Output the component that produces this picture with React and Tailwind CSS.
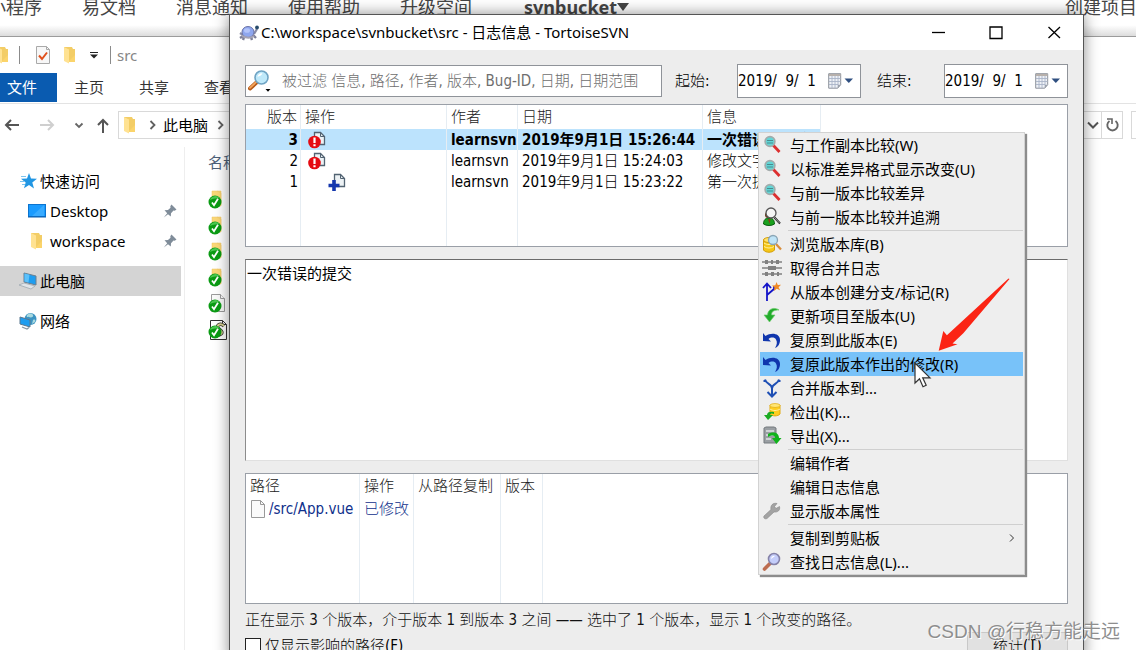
import React, { useState } from "react";

/* ---------- 图标 ---------- */

const Folder = ({ className = "" }) => (
  <svg viewBox="0 0 14 18" className={`h-[18px] w-[14px] shrink-0 ${className}`}>
    <path d="M1 1h8l1 2h2v12H1z" fill="#f3cd66" />
    <path d="M1 1l5 2.500v14L1 15z" fill="#ffe292" />
    <path d="M6 15l6-6v7H6z" fill="#fbd46b" />
  </svg>
);

const PropertyPage = () => (
  <svg viewBox="0 0 14 18" className="h-[18px] w-[14px] shrink-0">
    <path d="M.5.5h10l3 3v14H.5z" fill="#f7f7f7" stroke="#a9a9a9" />
    <path d="M10.500.5v3h3" fill="none" stroke="#a9a9a9" />
    <path d="M3 9.500l3 3.500 5-6.500" fill="none" stroke="#e0501c" strokeWidth="2" />
  </svg>
);

const Star = () => (
  <svg viewBox="0 0 17 16" className="h-4 w-[17px] shrink-0">
    <path d="M9 0l2 5.500 6 .3-4.700 3.700L14 15.500l-5-3.400-5 3.200 1.700-5.800L1 5.800l6-.3z" fill="#2196e3" />
    <path d="M1 3.500h5M0 8.500h4M2 11.500h3" stroke="#7cc4ef" strokeWidth="1" />
  </svg>
);

const DesktopIcon = () => (
  <svg viewBox="0 0 18 14" className="h-[14px] w-[18px] shrink-0">
    <rect x=".5" y=".5" width="17" height="12" fill="#1a9bff" stroke="#0c74cf" />
    <path d="M4 12L16 1v11z" fill="#39abff" />
    <path d="M0 13h18" stroke="#0b5fae" />
  </svg>
);

const ComputerIcon = () => (
  <svg viewBox="0 0 19 18" className="h-[18px] w-[19px] shrink-0">
    <path d="M6 1l12 3v9L6 10z" fill="#1e9df0" stroke="#6a7f90" />
    <path d="M6.500 1.500l5 1.200-1 7.800-4-1z" fill="#5bc1fb" />
    <path d="M1 13l5-2 11 3-4 3z" fill="#e0e4e8" stroke="#98a3ac" strokeWidth=".7" />
  </svg>
);

const NetworkIcon = () => (
  <svg viewBox="0 0 18 18" className="h-[18px] w-[18px] shrink-0">
    <circle cx="11.500" cy="7" r="6" fill="#3d94c2" />
    <path d="M8 3c2-2 5-2 6 0s-2 3-4 2-3 0-2-2zM14 8c2-1 3 0 2 2l-3 2z" fill="#a9d9df" />
    <path d="M1 5l10 3v7L1 12z" fill="#1e9df0" stroke="#5b7890" />
    <path d="M3 15l5 2 2-1.500" fill="none" stroke="#8898a5" strokeWidth="1.300" />
  </svg>
);

const Pin = () => (
  <svg viewBox="0 0 14 14" className="h-[14px] w-[14px] shrink-0">
    <path d="M8.500.5l5 5-1.800 1.200-1.200-.2-2.500 2.700-.2 3.300L5 10.200.8 13.500l3.400-4.300L1.500 6.300l3.500-.2 2.500-2.400-.2-1.500z" fill="#7f8c99" />
  </svg>
);

const FileEntry = ({ kind }) => (
  <svg viewBox="0 0 20 22" className="h-[22px] w-5 shrink-0">
    {kind === "folder" && <path d="M4 2h9v15H4zM9 2l4 2v12" fill="#fbd878" stroke="#efc665" strokeWidth=".5" />}
    {kind === "file" && (
      <g fill="#fafafa" stroke="#9b9b9b">
        <path d="M3.500 1.500h9l4 4v13h-13z" />
        <path d="M12.500 1.500v4h4" />
      </g>
    )}
    {kind === "script" && (
      <g>
        <path d="M2.500 1.500h12l4 4v15h-16z" fill="#fff" stroke="#333" />
        <path d="M14.500 1.500v4h4" fill="none" stroke="#333" />
        <path d="M16 7c-4-4-9 0-5 3s4 5-1 6" fill="none" stroke="#333" strokeWidth="3.500" />
        <path d="M16 7c-4-4-9 0-5 3s4 5-1 6" fill="none" stroke="#d6cf8e" strokeWidth="2" />
      </g>
    )}
    <circle cx="7" cy="13" r="6.500" fill="#0a9b13" />
    <path d="M2 11a5.500 5.500 0 0 1 9.800-1.500C8 9 5 10 2 11z" fill="#4cc751" />
    <path d="M4 13.500l2 2.700 4-6.500" fill="none" stroke="#fff" strokeWidth="1.800" />
  </svg>
);

const Turtle = () => (
  <svg viewBox="0 0 20 16" className="h-4 w-5 shrink-0">
    <path d="M4 11L1 13M5 12l-1 3M12 12l1 3M14 10l3 3" stroke="#7d7f98" strokeWidth="2.400" />
    <path d="M1 8l3 2M15 9l3-5" stroke="#8b8da6" strokeWidth="2.200" />
    <ellipse cx="9" cy="7" rx="6" ry="5.500" fill="#8ea6ee" stroke="#6b74a8" />
    <ellipse cx="8" cy="5.500" rx="3" ry="2.300" fill="#b3c4fa" />
    <path d="M3 11c4 2 9 2 12 0" fill="none" stroke="#a5a3b4" strokeWidth="2" />
    <circle cx="18" cy="2.500" r="1.900" fill="#274b6b" />
  </svg>
);

const FilterGlass = () => (
  <svg viewBox="0 0 24 22" className="h-[22px] w-6 shrink-0">
    <path d="M2 18.500L9 12" stroke="#b55a19" strokeWidth="4" strokeLinecap="round" />
    <path d="M2 17.800L8 12.200" stroke="#f4a55c" strokeWidth="1.800" strokeLinecap="round" />
    <circle cx="13.500" cy="7.500" r="6.500" fill="#bfe9fa" stroke="#6fa4c4" strokeWidth="1.600" />
    <path d="M9.500 7a4 4 0 0 1 5-3.500c-1 2-3 2.500-5 3.500z" fill="#fff" />
    <path d="M17.500 19h5l-2.500 2.700z" fill="#000" />
  </svg>
);

const Calendar = () => (
  <svg viewBox="0 0 25 16" className="h-4 w-[25px] shrink-0">
    <path d="M.7.7h12v11l-3 3.500h-9z" fill="#eef1f6" stroke="#8d929b" />
    <path d="M1 2h11.500" stroke="#b7b0ab" strokeWidth="2" />
    <path d="M1 5.500h11.500M1 8.500h11.500M1 11.500h9M4 3v12M7 3v12M10 3v9" stroke="#a9b4c8" strokeWidth=".9" />
    <path d="M12.700 11.700h-3v3.500z" fill="#9aa0ab" />
    <path d="M16.500 5.500h8.500l-4.200 4.500z" fill="#2f4f80" />
  </svg>
);

const ModifiedIcon = () => (
  <svg viewBox="0 0 18 18" className="h-[18px] w-[18px] shrink-0">
    <path d="M6.500 1.500h6l4 4v8h-10z" fill="#edf2f5" stroke="#526372" strokeWidth="1.300" />
    <path d="M12.500 1.500v4h4" fill="none" stroke="#526372" />
    <circle cx="6.500" cy="11" r="6.300" fill="#e50b12" />
    <path d="M6.500 6.500v5.500M6.500 13.300v2" stroke="#fff" strokeWidth="2.200" />
  </svg>
);

const AddedIcon = () => (
  <svg viewBox="0 0 18 18" className="ml-5 h-[18px] w-[18px] shrink-0">
    <path d="M6.500 1.500h6l4 4v8h-10z" fill="#edf2f5" stroke="#526372" strokeWidth="1.300" />
    <path d="M12.500 1.500v4h4" fill="none" stroke="#526372" />
    <path d="M6 7v11M.5 12.500h11" stroke="#1437ad" strokeWidth="3.600" />
  </svg>
);

const BlankFile = () => (
  <svg viewBox="0 0 14 18" className="h-[18px] w-[14px] shrink-0">
    <path d="M.5.5h9l4 4v13H.5z" fill="#fafafa" stroke="#999" />
    <path d="M9.500.5v4h4" fill="none" stroke="#999" />
  </svg>
);

/* 右键菜单图标，统一画在 20x20 的画布上 */
const menuIcons = {
  diff: (
    <g>
      <path d="M11 10l6.500 7" stroke="#dc2f2f" strokeWidth="2.800" />
      <circle cx="8" cy="6.500" r="4.800" fill="#62d6d6" stroke="#a3abab" strokeWidth="1.800" />
      <path d="M5 5.500h6M5 8h6" stroke="#4a8b8e" />
    </g>
  ),
  blame: (
    <g>
      <path d="M1.500 17c0-4 2-6 5.500-6s5.500 2 5.500 6c-3 2-8 2-11 0z" fill="#19a11e" stroke="#0a5c10" />
      <path d="M6 12h2.500l-1 5z" fill="#8a3d1d" />
      <circle cx="6" cy="8" r="3" fill="#6b3d1d" />
      <path d="M12.500 10.500l5.500 6" stroke="#222" strokeWidth="2" />
      <path d="M12.500 10.500l5 5.500" stroke="#bbb" strokeWidth=".8" />
      <circle cx="9" cy="6" r="5" fill="#f5f5f5" stroke="#555" strokeWidth="1.300" />
    </g>
  ),
  browse: (
    <g>
      <path d="M1.500 6v10c2 3 9 3 11 0V6z" fill="#f5c617" stroke="#d39e08" />
      <path d="M2 9c3 2 7 2 10 0M2 12.500c3 2 7 2 10 0" fill="none" stroke="#fff2a0" />
      <ellipse cx="7" cy="6" rx="5.500" ry="2.500" fill="#ffe269" stroke="#d39e08" />
      <path d="M14 10l5 5.500" stroke="#d98d3a" strokeWidth="2.200" />
      <circle cx="11" cy="6" r="4.500" fill="#bfe4f7" stroke="#8aa5b5" strokeWidth="1.300" />
    </g>
  ),
  mergeinfo: (
    <g stroke="#808080" strokeWidth="1.600" fill="#808080">
      <path d="M0 4h20M0 10h20M0 16h20" />
      <path d="M3 2h3v4H3zM9 2h2v4H9zM14 2h3v4h-3zM6 8h8v4H6zM3 14h3v4H3zM9 14h3v4H9zM15 14h2v4h-2z" stroke="none" />
    </g>
  ),
  branch: (
    <g>
      <path d="M5 19V2M1 6l4-4.500L9 6M5 13l7-6v-3" fill="none" stroke="#1414c8" strokeWidth="1.800" />
      <path d="M14.500 0l1.300 3 3.200-.2-2.400 2.400 1.500 3-3.300-1.500L12 9l.5-3.400L10 3.500l3.300-.3z" fill="#f08a24" />
    </g>
  ),
  update: <path d="M17 4C13 1 6 2 5.500 9H2l5.500 7L13 9H9.500c0-4 3-5 7.500-5z" fill="#22ab2b" stroke="#6acb6a" strokeWidth=".7" />,
  revert: <path d="M1 3l2.500 3C9 2 18 3 18 10c0 4-2 7-5 8 2-3 2.500-6 1-8.500C12.500 7 9 7 6.500 9L9 11.500 1 11z" fill="#1036ad" />,
  merge: <path d="M3 1.500c1 5 7 4 7 9M17 1.500c-1 5-7 4-7 9M10 9v9M5.500 14l4.500 4.500L14.500 14M1.500 3h3M15.500 3h3" fill="none" stroke="#1e4fb4" strokeWidth="2" />,
  checkout: (
    <g>
      <path d="M8 3v9c2 2.500 8 2.500 10 0V3z" fill="#ffce1f" stroke="#e0aa12" />
      <path d="M8 7c3 2 7 2 10 0" fill="none" stroke="#fff0a0" />
      <ellipse cx="13" cy="3.500" rx="5" ry="2" fill="#ffe675" stroke="#e0aa12" strokeWidth=".7" />
      <path d="M12 10C8 9 5 10 5 13H2l4 5 5-5H8c0-1.500 2-2 4-1z" fill="#1bab22" />
    </g>
  ),
  export: (
    <g>
      <path d="M2 2l2-1h8l2 1v15H2z" fill="#9a9fa3" stroke="#747a7f" />
      <path d="M4 5h8M4 9h8M4 13h5" stroke="#e0e4e6" strokeWidth="1.500" />
      <path d="M6 8c6-3 11-1 11 4h2.500L14.500 18 10 12h3c0-3-3-3-7-1z" fill="#10b31b" />
    </g>
  ),
  wrench: <path d="M2 15l7-6.500c-1-4 2-7 6-6l-2.500 3 1.500 2 3.500-2c1 4-2 6-5.500 5.500l-7 6.500c-2 1-4-.5-3-2.500z" fill="#a3a3a3" stroke="#858585" strokeWidth=".6" />,
  find: (
    <g>
      <path d="M2.500 17L8 11.500" stroke="#bd6d50" strokeWidth="3.600" strokeLinecap="round" />
      <circle cx="12" cy="7" r="5.500" fill="#c4cdfa" stroke="#8582a8" strokeWidth="1.600" />
      <path d="M9 7a3 3 0 0 1 4-3z" fill="#fff" />
    </g>
  ),
};

/* ---------- 数据 ---------- */

const siteNav = ["小程序", "易文档", "消息通知", "使用帮助", "升级空间"];

const logs = [
  { rev: 3, action: <ModifiedIcon />, author: "learnsvn", date: "2019年9月1日 15:26:44", message: "一次错误的提交" },
  { rev: 2, action: <ModifiedIcon />, author: "learnsvn", date: "2019年9月1日 15:24:03", message: "修改文字" },
  { rev: 1, action: <AddedIcon />, author: "learnsvn", date: "2019年9月1日 15:23:22", message: "第一次提交" },
];

const menuGroups = [
  [
    { icon: "diff", label: "与工作副本比较(W)" },
    { icon: "diff", label: "以标准差异格式显示改变(U)" },
    { icon: "diff", label: "与前一版本比较差异" },
    { icon: "blame", label: "与前一版本比较并追溯" },
  ],
  [
    { icon: "browse", label: "浏览版本库(B)" },
    { icon: "mergeinfo", label: "取得合并日志" },
    { icon: "branch", label: "从版本创建分支/标记(R)" },
    { icon: "update", label: "更新项目至版本(U)" },
    { icon: "revert", label: "复原到此版本(E)" },
    { icon: "revert", label: "复原此版本作出的修改(R)" },
    { icon: "merge", label: "合并版本到..." },
    { icon: "checkout", label: "检出(K)..." },
    { icon: "export", label: "导出(X)..." },
  ],
  [
    { label: "编辑作者" },
    { label: "编辑日志信息" },
    { icon: "wrench", label: "显示版本属性" },
  ],
  [
    { label: "复制到剪贴板", submenu: true },
    { icon: "find", label: "查找日志信息(L)..." },
  ],
];

/* ---------- 后面的网页和资源管理器 ---------- */

const SiteHeader = () => (
  <header className="flex h-9 items-start justify-between overflow-hidden bg-linear-to-b from-white from-70% to-[#dcdcdc] text-lg text-[#454545]">
    <nav className="-mt-2 -ml-3 flex shrink-0 gap-10 leading-[30px]">
      {siteNav.map((name) => (
        <a key={name} href="#">{name}</a>
      ))}
      <a href="#" className="ml-3 flex items-center font-bold">
        svnbucket
        <svg viewBox="0 0 12 8" className="h-2 w-3"><path d="M0 0h12L6 8z" fill="#454545" /></svg>
      </a>
    </nav>
    <a href="#" className="-mt-2 -mr-px shrink-0 leading-[30px]">创建项目</a>
  </header>
);

const Chevron = ({ className = "" }) => (
  <svg viewBox="0 0 8 10" className={`h-[10px] w-2 shrink-0 ${className}`}>
    <path d="M1.500 1l4 4-4 4" fill="none" stroke="#606060" strokeWidth="1.800" />
  </svg>
);

const Explorer = () => (
  <section className="flex flex-1 flex-col border-t border-[#9b9b9b] bg-white text-[15px]">
    <div className="flex h-9 items-center text-[#868686]">
      <Folder className="-ml-1" />
      <span className="ml-[9px] h-[18px] w-px bg-[#8b8b8b]" />
      <span className="ml-4"><PropertyPage /></span>
      <Folder className="ml-[13px]" />
      <svg viewBox="0 0 8 7" className="ml-[13px] h-[7px] w-2"><path d="M0 .5h8" stroke="#222" /><path d="M0 2.500h8L4 6.500z" fill="#222" /></svg>
      <span className="ml-3 h-[18px] w-px bg-[#8b8b8b]" />
      <span className="ml-[6px]">src</span>
    </div>

    <nav className="flex h-[31px] items-start border-b border-[#e3e3e3] leading-[29px] text-[#333]">
      <a href="#" className="h-[29px] w-[57px] shrink-0 bg-[#0a5bb0] pl-[7px] text-white">文件</a>
      <a href="#" className="ml-[17px]">主页</a>
      <a href="#" className="ml-[35px]">共享</a>
      <a href="#" className="ml-[35px]">查看</a>
    </nav>

    <div className="mt-[7px] flex h-7 items-center">
      <div className="flex w-[118px] shrink-0 items-center gap-[19px] pl-1">
        <button aria-label="后退">
          <svg viewBox="0 0 16 12" className="h-3 w-4"><path d="M15 6H2M7 1L2 6l5 5" fill="none" stroke="#555" strokeWidth="2" /></svg>
        </button>
        <button aria-label="前进">
          <svg viewBox="0 0 16 12" className="h-3 w-4"><path d="M1 6h13M9 1l5 5-5 5" fill="none" stroke="#cfcfcf" strokeWidth="2" /></svg>
        </button>
        <button aria-label="最近位置">
          <svg viewBox="0 0 10 7" className="h-[7px] w-[10px]"><path d="M1.500 1.500L5 5l3.500-3.500" fill="none" stroke="#666" strokeWidth="1.800" /></svg>
        </button>
        <button aria-label="上移" className="-ml-[6px]">
          <svg viewBox="0 0 12 15" className="h-[15px] w-3"><path d="M6 15V2M1 7l5-5 5 5" fill="none" stroke="#555" strokeWidth="2" /></svg>
        </button>
      </div>
      <div className="flex h-7 flex-1 items-center border border-[#d9d9d9] pl-1">
        <Folder />
        <Chevron className="ml-3" />
        <span className="ml-[6px]">此电脑</span>
        <Chevron className="ml-[9px]" />
        <button aria-label="历史" className="ml-auto flex h-full w-[18px] items-center justify-center border-r border-[#d9d9d9]">
          <svg viewBox="0 0 12 8" className="h-2 w-3"><path d="M1 1.500l5 5 5-5" fill="none" stroke="#555" strokeWidth="2" /></svg>
        </button>
        <button aria-label="刷新" className="flex w-5 items-center justify-center">
          <svg viewBox="0 0 14 14" className="h-[14px] w-[14px]">
            <path d="M10.500 3a5.200 5.200 0 1 1-6 0" fill="none" stroke="#666" strokeWidth="1.900" />
            <path d="M2 1h5v5" fill="none" stroke="#666" strokeWidth="1.600" />
          </svg>
        </button>
      </div>
      <div className="ml-2 h-7 w-[5px] border border-r-0 border-[#d9d9d9]" />
    </div>

    <div className="mt-2 flex flex-1">
      <aside className="flex w-[185px] shrink-0 flex-col border-r border-[#eee] pt-[19px]">
        <a href="#" className="flex h-[30px] items-center gap-[3px] pl-5"><Star />快速访问</a>
        <a href="#" className="flex h-[30px] items-center gap-1 pr-[7px] pl-7">
          <DesktopIcon />
          <span className="flex-1">Desktop</span>
          <Pin />
        </a>
        <a href="#" className="flex h-[30px] items-center gap-[6px] pr-[7px] pl-[30px]">
          <Folder />
          <span className="flex-1">workspace</span>
          <Pin />
        </a>
        <a href="#" className="mt-[10px] mr-[3px] flex h-[30px] items-center gap-[3px] bg-[#d4d4d4] pl-[18px]"><ComputerIcon />此电脑</a>
        <a href="#" className="mt-[10px] flex h-[30px] items-center gap-[3px] pl-[19px]"><NetworkIcon />网络</a>
      </aside>
      <div className="pt-1 pl-[23px]">
        <div className="text-[#4c6078]">名称</div>
        <div className="mt-[15px] flex flex-col gap-1">
          <FileEntry kind="folder" />
          <FileEntry kind="folder" />
          <FileEntry kind="folder" />
          <FileEntry kind="folder" />
          <FileEntry kind="file" />
          <FileEntry kind="script" />
        </div>
      </div>
    </div>
  </section>
);

/* ---------- 日志对话框 ---------- */

const DateField = ({ id, label, labelWidth }) => (
  <>
    <label htmlFor={id} className={`shrink-0 font-light ${labelWidth}`}>{label}</label>
    <div className="flex h-[34px] w-[124px] shrink-0 items-center border border-[#8f9399] bg-white">
      <input id={id} defaultValue="2019/  9/  1" className="w-[90px] bg-transparent whitespace-pre outline-none" />
      <button aria-label="选择日期"><Calendar /></button>
    </div>
  </>
);

const cell = "border-r border-[#e6edf3] p-0 pl-1 whitespace-nowrap";

const LogTable = ({ selected, onSelect }) => (
  <div className="mt-[6px] border border-[#9a9fa7] bg-white">
    <table className="w-full table-fixed border-separate border-spacing-0 text-left">
      <colgroup>
        <col className="w-[55px]" />
        <col className="w-[146px]" />
        <col className="w-[71px]" />
        <col className="w-[185px]" />
        <col className="w-[118px]" />
        <col />
      </colgroup>
      <thead className="text-[#222]">
        <tr className="h-[24px]">
          <th className={`${cell} pr-[3px] text-right font-light`}>版本</th>
          <th className={`${cell} font-light`}>操作</th>
          <th className={`${cell} font-light`}>作者</th>
          <th className={`${cell} font-light`}>日期</th>
          <th className={`${cell} font-light`}>信息</th>
          <td />
        </tr>
      </thead>
      <tbody>
        {logs.map((log) => (
          <tr
            key={log.rev}
            onClick={() => onSelect(log.rev)}
            className={log.rev === selected ? "h-[21px] font-bold [&>td:not(:last-child)]:bg-[#bce3fd]" : "h-[21px] font-light"}
          >
            <td className={`${cell} pr-[2px] text-right`}>{log.rev}</td>
            <td className={`${cell} pl-[7px]`}>{log.action}</td>
            <td className={cell}>{log.author}</td>
            <td className={cell}>{log.date}</td>
            <td className={cell}>{log.message}</td>
            <td />
          </tr>
        ))}
        <tr className="h-[54px]">
          <td className={cell} />
          <td className={cell} />
          <td className={cell} />
          <td className={cell} />
          <td />
          <td />
        </tr>
      </tbody>
    </table>
  </div>
);

const PathTable = () => (
  <div className="mt-3 border border-[#9a9fa7] bg-white">
    <table className="w-full table-fixed border-separate border-spacing-0 text-left">
      <colgroup>
        <col className="w-[114px]" />
        <col className="w-[54px]" />
        <col className="w-[87px]" />
        <col className="w-[42px]" />
        <col />
      </colgroup>
      <thead className="text-[#222]">
        <tr className="h-6">
          <th className={`${cell} font-light`}>路径</th>
          <th className={`${cell} font-light`}>操作</th>
          <th className={`${cell} font-light`}>从路径复制</th>
          <th className={`${cell} font-light`}>版本</th>
          <td />
        </tr>
      </thead>
      <tbody>
        <tr className="h-[21px] font-light text-[#10308c]">
          <td className={cell}>
            <span className="flex items-center gap-1 pl-px"><BlankFile />/src/App.vue</span>
          </td>
          <td className={cell}>已修改</td>
          <td className={cell} />
          <td className={cell} />
          <td />
        </tr>
        <tr className="h-[84px]">
          <td className={cell} />
          <td className={cell} />
          <td className={cell} />
          <td className={cell} />
          <td />
        </tr>
      </tbody>
    </table>
  </div>
);

const ContextMenu = ({ active, onHover }) => (
  <div role="menu" className="absolute top-[117px] left-[528px] w-[267px] border border-[#d2d2d2] bg-[#eeeeee] px-px font-['Noto_Sans','Noto_Sans_CJK_SC',sans-serif] leading-5 shadow-[2px_2px_1px_#8c8c8c]">
    {menuGroups.map((items, i) => (
      <div key={i}>
        {i > 0 && <div className="flex h-[3px] items-center pl-7"><hr className="w-full border-[#cfcfcf]" /></div>}
        {items.map((item) => (
          <button
            key={item.label}
            role="menuitem"
            onMouseEnter={() => onHover(item.label)}
            className={`flex h-6 w-full items-center gap-2 pl-[2px] text-left ${item.label === active ? "bg-[#78c2f9]" : ""}`}
          >
            <svg viewBox="0 0 20 20" className="h-5 w-5 shrink-0">{item.icon && menuIcons[item.icon]}</svg>
            <span className="flex-1">{item.label}</span>
            {item.submenu && (
              <svg viewBox="0 0 6 8" className="mr-2 h-2 w-[6px]"><path d="M1 .5L4.500 4 1 7.500" fill="none" stroke="#333" /></svg>
            )}
          </button>
        ))}
      </div>
    ))}
  </div>
);

const LogDialog = () => {
  const [selected, setSelected] = useState(3);
  const [active, setActive] = useState("复原此版本作出的修改(R)");
  const current = logs.find((log) => log.rev === selected);

  return (
    <section className="absolute top-[14px] right-[52px] left-[229px] border border-[#555] bg-[#ededed] text-[15px] shadow-[0_0_14px_rgba(0,0,0,0.45)]">
      <div className="flex h-[35px] items-center bg-white pl-[9px]">
        <Turtle />
        <h1 className="ml-[2px] flex-1 whitespace-nowrap">C:\workspace\svnbucket\src - 日志信息 - TortoiseSVN</h1>
        <div className="flex items-center gap-11 pr-[22px]">
          <button aria-label="最小化">
            <svg viewBox="0 0 14 14" className="h-[14px] w-[14px]"><path d="M1 6.500h13" stroke="#000" strokeWidth="1.300" /></svg>
          </button>
          <button aria-label="最大化">
            <svg viewBox="0 0 14 14" className="h-[14px] w-[14px]"><path d="M1 1h12v11.500H1z" fill="none" stroke="#000" strokeWidth="1.300" /></svg>
          </button>
          <button aria-label="关闭">
            <svg viewBox="0 0 14 14" className="h-[14px] w-[14px]"><path d="M1.500 1l11.500 11M13 1L1.500 12" stroke="#000" strokeWidth="1.300" /></svg>
          </button>
        </div>
      </div>

      <div className="px-[15px] pt-[14px] font-['DejaVu_Sans_Condensed','Noto_Sans_CJK_SC',sans-serif] leading-5">
        <div className="flex items-center">
          <div className="mr-[13px] flex h-8 flex-1 items-center border border-[#8f9399] bg-white pr-5">
            <button aria-label="过滤" className="pl-[2px]"><FilterGlass /></button>
            <input
              aria-label="过滤日志"
              placeholder="被过滤 信息, 路径, 作者, 版本, Bug-ID, 日期, 日期范围"
              className="ml-[10px] w-0 flex-1 bg-transparent font-light outline-none placeholder:text-[#6e6e6e]"
            />
          </div>
          <DateField id="date-from" label="起始:" labelWidth="w-[62px]" />
          <span className="w-4 shrink-0" />
          <DateField id="date-to" label="结束:" labelWidth="w-[67px]" />
        </div>

        <LogTable selected={selected} onSelect={setSelected} />

        <textarea
          aria-label="日志信息"
          readOnly
          value={current.message}
          className="mt-3 block h-[202px] w-full resize-none border border-t-[#6b6b6b] border-r-[#e0e0e0] border-b-[#e0e0e0] border-l-[#8c8c8c] bg-white px-px py-1 outline-none"
        />

        <PathTable />

        <p className="mt-[6px] font-light whitespace-nowrap text-[#111]">
          正在显示 3 个版本，介于版本 1 到版本 3 之间 —— 选中了 1 个版本，显示 1 个改变的路径。
        </p>

        <div className="flex items-start justify-between">
          <label className="mt-[6px] flex items-start gap-1 font-light">
            <input type="checkbox" className="mt-[2px] h-4 w-4 appearance-none border border-[#222] bg-white checked:bg-[#0a5bb0]" />
            仅显示影响的路径(F)
          </label>
          <button className="mt-[2px] h-7 w-[101px] border border-[#c8c8c8] bg-[#e1e1e1] font-light">统计(T)</button>
        </div>
      </div>

      <ContextMenu active={active} onHover={setActive} />

      {/* 指向高亮菜单项的红色箭头和鼠标指针 */}
      <svg viewBox="0 0 76 76" className="pointer-events-none absolute top-[262px] left-[706px] h-[76px] w-[76px]">
        <path d="M73.500 2L27.300 56.300 16.500 66.500l5 .7L2.700 73.700 7.300 54l3.600 4.200L72.500 1.500z" fill="#fb2414" />
      </svg>
      <svg viewBox="0 0 18 27" className="pointer-events-none absolute top-[347px] left-[684px] h-[27px] w-[18px]">
        <path d="M1 1v20l4.500-4.200 3.500 8 3.200-1.500-3.500-7.500H16z" fill="#fff" stroke="#333" strokeWidth="1.200" />
      </svg>
    </section>
  );
};

const App = () => (
  <div className="relative flex h-screen flex-col overflow-hidden bg-white font-['Noto_Sans','Noto_Sans_CJK_SC',sans-serif] text-black">
    <SiteHeader />
    <Explorer />
    <LogDialog />
    <div className="pointer-events-none absolute right-4 bottom-1 font-['Liberation_Sans','Noto_Sans_CJK_SC',sans-serif] text-[19px] leading-7 text-[#8e8e8e] [text-shadow:1px_1px_0_#fff]">
      CSDN @行稳方能走远
    </div>
  </div>
);

export default App;
